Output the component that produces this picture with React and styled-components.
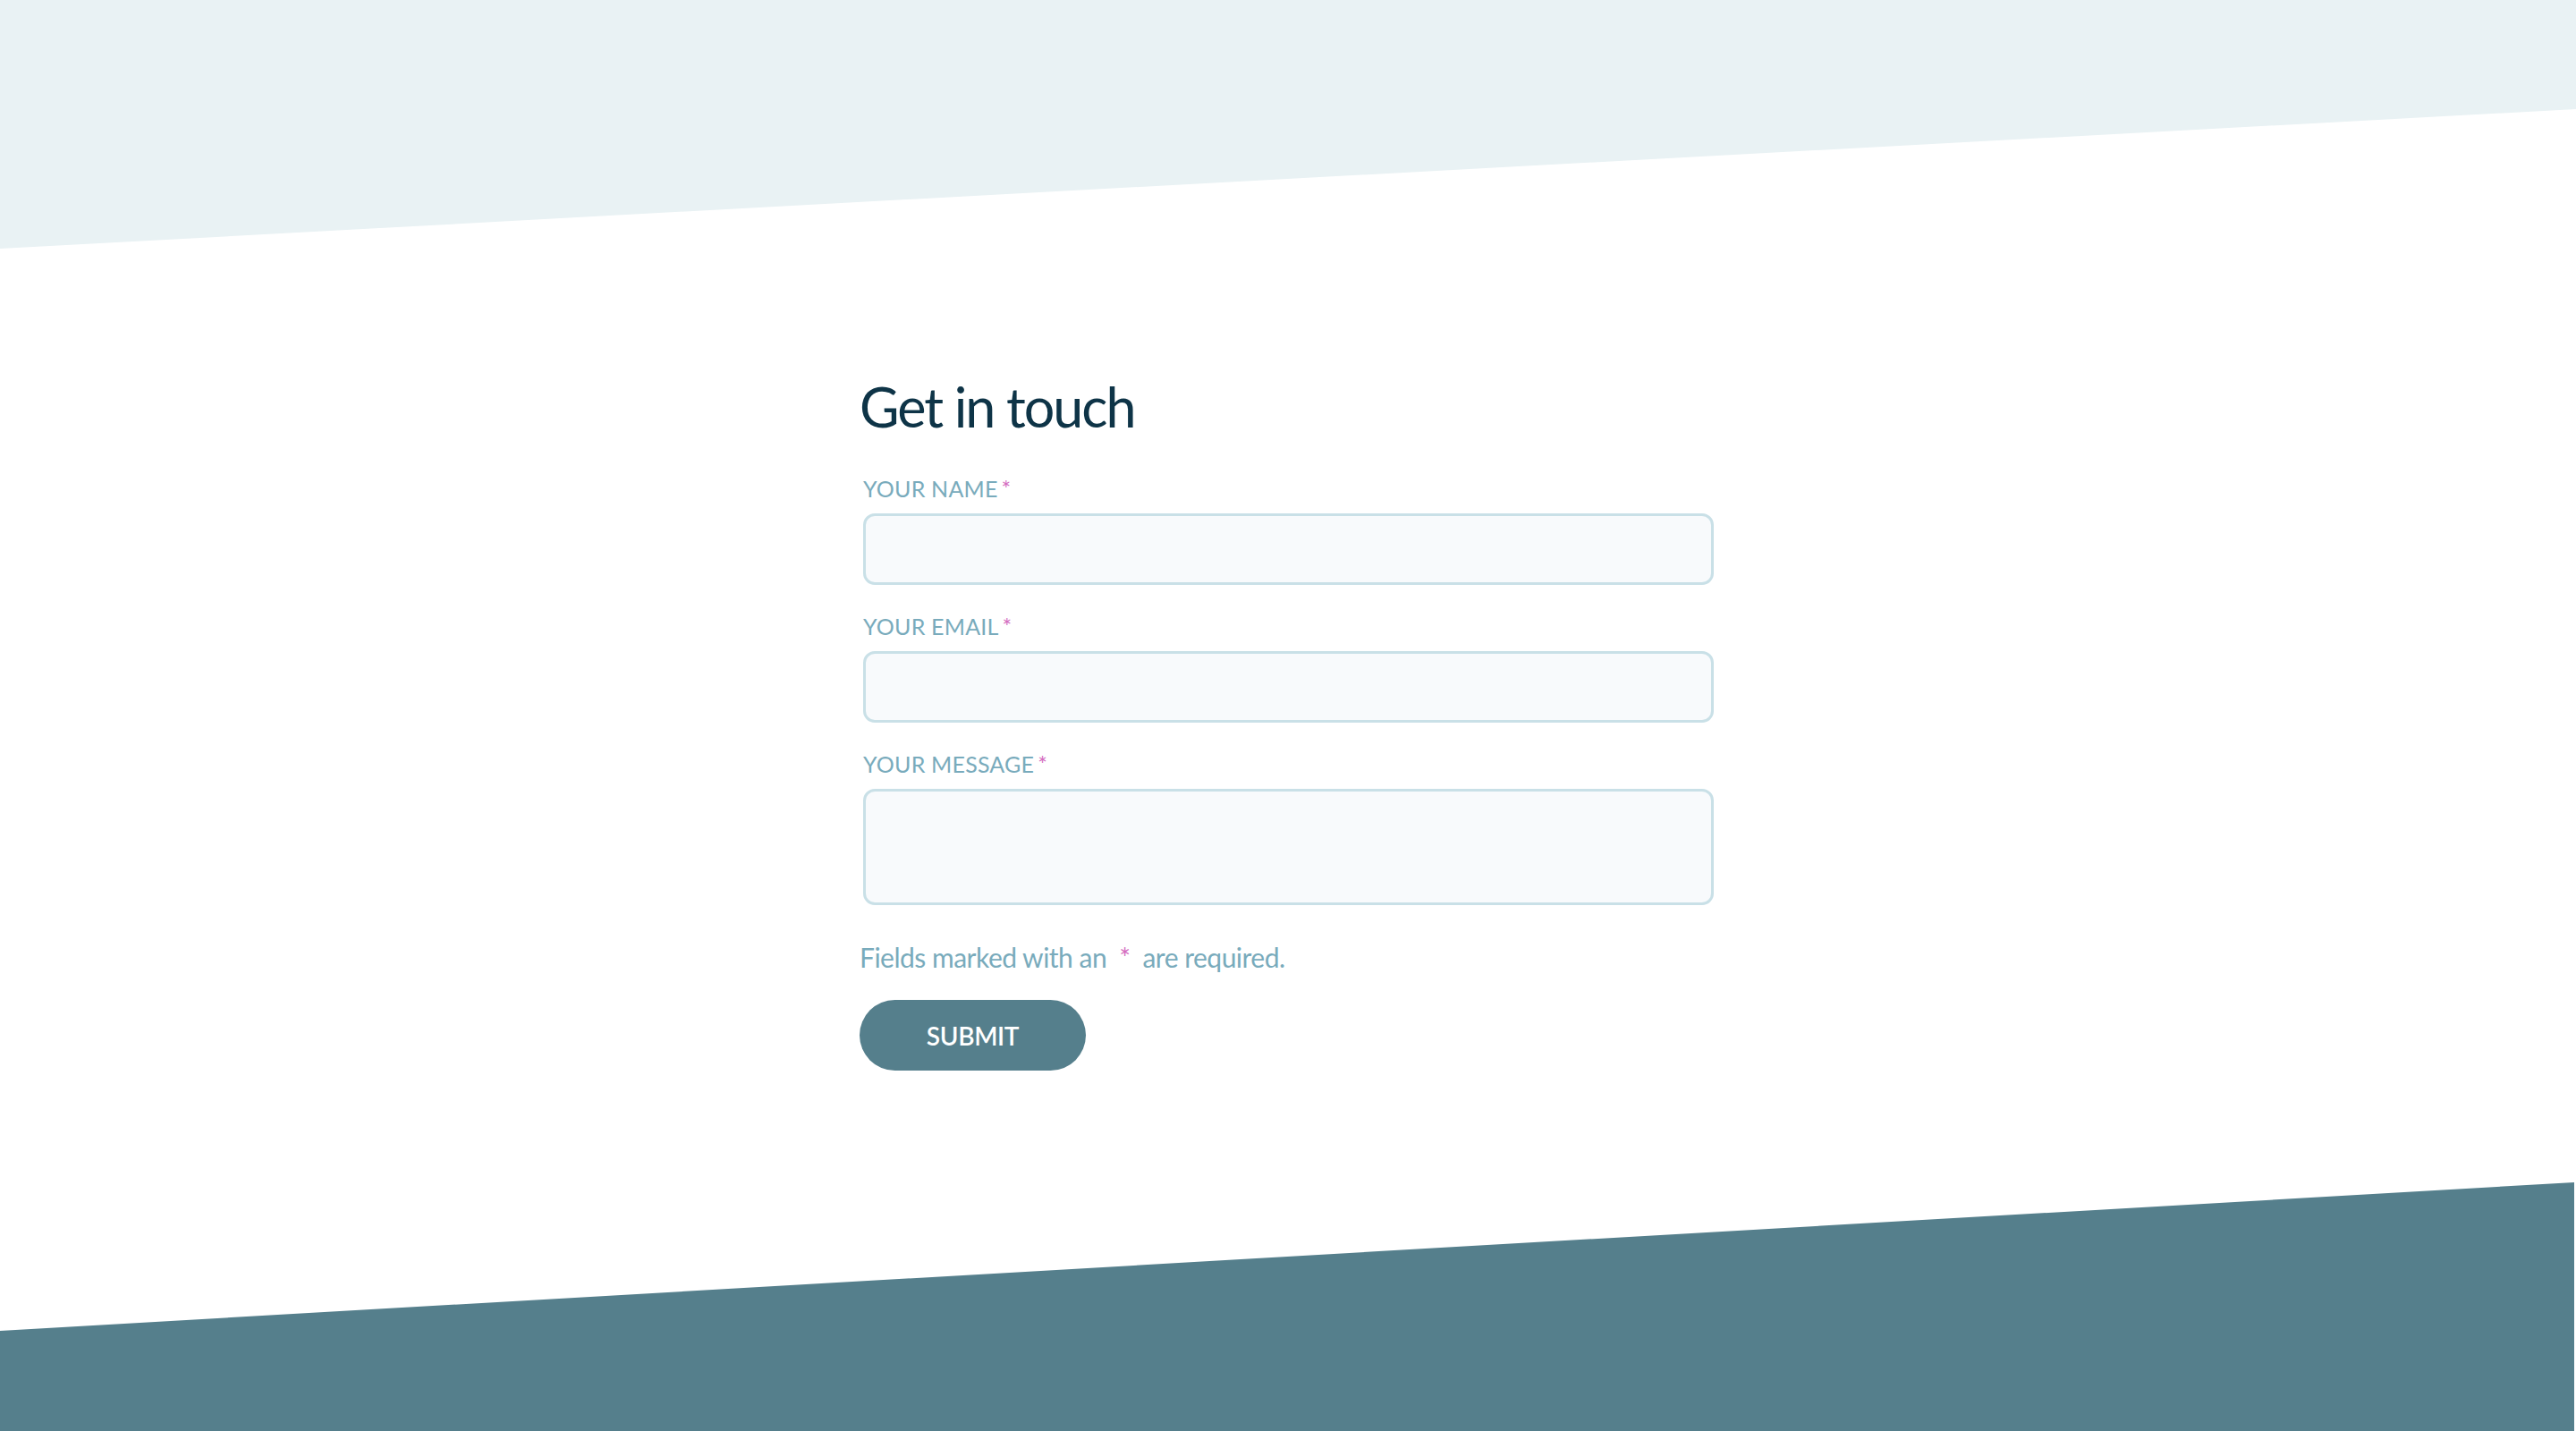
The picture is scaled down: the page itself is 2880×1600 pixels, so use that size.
import React from 'react';
import styled, { createGlobalStyle } from 'styled-components';

const colors = {
    heading: "#0e3447",
    label: "#79abbc",
    star: "#d46cbf",
    fieldBorder: "#c9e0e7",
    fieldBg: "#f8fafc",
    teal: "#557f8c",
    mist: "#e9f2f4"
}

const GlobalStyle = createGlobalStyle`
    html, body {
        margin: 0;
        padding: 0;
        background: #ffffff;
    }
    * {
        box-sizing: border-box;
    }
`

const Page = styled.main`
    position: relative;
    min-height: 100vh;
    overflow: hidden;
    font-family: Lato, "Open Sans", sans-serif;
`

// slanted decorative bands, they sit behind the form
const TopBand = styled.div`
    position: absolute;
    top: 0;
    left: 0;
    right: 0;
    height: 278px;
    background: ${colors.mist};
    clip-path: polygon(0 0, 100% 0, 100% 122px, 0 100%);
`

const BottomBand = styled.div`
    position: absolute;
    bottom: 0;
    left: 0;
    right: 2px;
    height: 278px;
    background: ${colors.teal};
    clip-path: polygon(0 166px, 100% 0, 100% 100%, 0 100%);
`

const Form = styled.form`
    position: relative;
    z-index: 1;
    width: 958px;
    margin: 0 auto;
    padding-top: 424px;
    display: flex;
    flex-direction: column;
`

const Heading = styled.h1`
    margin: 0 0 49px;
    font-size: 61px;
    line-height: 61px;
    font-weight: 400;
    color: ${colors.heading};
    letter-spacing: -2px;
`

const Field = styled.div`
    display: flex;
    flex-direction: column;
    margin-bottom: 34px;
    &:last-of-type {
        margin-bottom: 43px;
    }
`

const Label = styled.label`
    margin: 0 0 15px 4px;
    font-size: 25px;
    line-height: 25px;
    color: ${colors.label};
    text-transform: uppercase;
    letter-spacing: 0.2px;
`

const Star = styled.span`
    color: ${colors.star};
    margin-left: ${({ spaced }) => spaced ? "14px" : "4px"};
    margin-right: ${({ spaced }) => spaced ? "14px" : "0"};
`

const Input = styled.input`
    margin-left: 4px;
    width: 951px;
    height: ${({ tall }) => tall ? "130px" : "80px"};
    border: 3px solid ${colors.fieldBorder};
    border-radius: 13px;
    background: ${colors.fieldBg};
    font: inherit;
    font-size: 26px;
    padding: 0 20px;
    outline: none;
`

const TextArea = styled(Input).attrs({ as: "textarea" })`
    padding: 16px 20px;
    resize: none;
`

const Note = styled.p`
    margin: 0 0 33px;
    font-size: 30px;
    line-height: 30px;
    letter-spacing: -0.5px;
    color: ${colors.label};
`

const SubmitButton = styled.button`
    align-self: flex-start;
    width: 253px;
    height: 79px;
    border: none;
    border-radius: 40px;
    background: ${colors.teal};
    color: #ffffff;
    font-family: inherit;
    font-size: 28px;
    font-weight: 600;
    letter-spacing: -0.3px;
    cursor: pointer;
`

export default function App() {
    return (
        <>
            <GlobalStyle />
            <Page>
                <TopBand />
                <BottomBand />
                <Form onSubmit={(e) => e.preventDefault()}>
                    <Heading>Get in touch</Heading>
                    <Field>
                        <Label htmlFor="name">Your Name<Star>*</Star></Label>
                        <Input id="name" type="text" />
                    </Field>
                    <Field>
                        <Label htmlFor="email">Your Email<Star>*</Star></Label>
                        <Input id="email" type="email" />
                    </Field>
                    <Field>
                        <Label htmlFor="message">Your Message<Star>*</Star></Label>
                        <TextArea id="message" tall />
                    </Field>
                    <Note>Fields marked with an<Star spaced>*</Star>are required.</Note>
                    <SubmitButton type="submit">SUBMIT</SubmitButton>
                </Form>
            </Page>
        </>
    )
}
